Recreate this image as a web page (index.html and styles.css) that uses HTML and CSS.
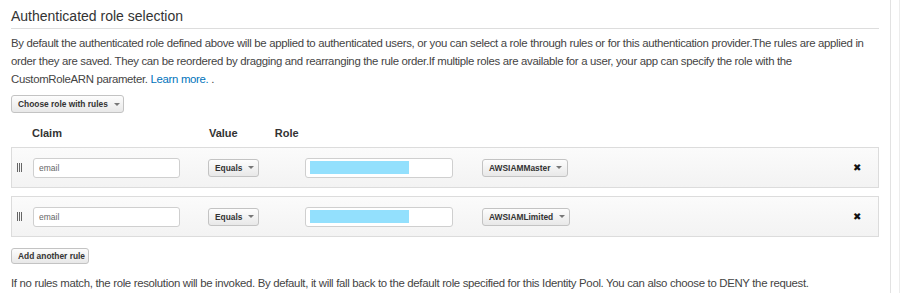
FILE: index.html
```html
<!DOCTYPE html>
<html lang="en">
<head>
  <meta charset="UTF-8">
  <meta name="viewport" content="width=device-width, initial-scale=1.0">
  <link rel="stylesheet" href="styles.css">
  <title>Authenticated role selection</title>
</head>
<body>
  <div id="console">
    <section class="roleSection">
      <h2>Authenticated role selection</h2>
      <p class="intro">By default the authenticated role defined above will be applied to authenticated users, or you can select a role through rules or for this authentication provider.The rules are applied in order they are saved. They can be reordered by dragging and rearranging the rule order.If multiple roles are available for a user, your app can specify the role with the<br>CustomRoleARN parameter. <a href="">Learn more.</a> .</p>

      <button class="btn chooseRole">Choose role with rules <span class="caret"></span></button>

      <div class="ruleHead">
        <span class="colClaim">Claim</span>
        <span class="colValue">Value</span>
        <span class="colRole">Role</span>
      </div>

      <div class="rule">
        <span class="handle"></span>
        <input class="field claim" type="text" placeholder="email">
        <button class="btn match">Equals <span class="caret"></span></button>
        <div class="field roleValue"><span class="masked"></span></div>
        <button class="btn roleBtn">AWSIAMMaster <span class="caret"></span></button>
        <span class="remove">&#10006;</span>
      </div>

      <div class="rule">
        <span class="handle"></span>
        <input class="field claim" type="text" placeholder="email">
        <button class="btn match">Equals <span class="caret"></span></button>
        <div class="field roleValue"><span class="masked"></span></div>
        <button class="btn roleBtn wide">AWSIAMLimited <span class="caret"></span></button>
        <span class="remove">&#10006;</span>
      </div>

      <button class="btn addRule">Add another rule</button>

      <p class="fallback">If no rules match, the role resolution will be invoked. By default, it will fall back to the default role specified for this Identity Pool. You can also choose to DENY the request.</p>
    </section>
    <div class="sideRail"></div>
  </div>
</body>
</html>
```

FILE: styles.css
```css
*{box-sizing: border-box;}
body
{
  margin: 0;
  background-color: #fff;
  font-family: "Liberation Sans", Arial, sans-serif;
  color: #444;
}
#console
{
  display: flex;
  height: 293px;
  overflow: hidden;
}
.roleSection
{
  width: 891px;
  padding: 0 11px;
  border-right: 1px solid #e2e2e2;
}
.sideRail
{
  width: 9px;
  border-right: 1px solid #ececec;
}
h2
{
  margin: 0;
  padding: 8px 0 4px;
  width: 868px;
  font-size: 14px;
  line-height: 16px;
  font-weight: normal;
  color: #333;
  border-bottom: 1px solid #ddd;
}
.intro,
.fallback
{
  font-size: 11.4px;
  letter-spacing: -0.32px;
  line-height: 18px;
}
.intro
{
  width: 868px;
  margin: 5px 0 0;
}
.intro a
{
  color: #0073bb;
  text-decoration: none;
}
.btn
{
  display: inline-flex;
  align-items: center;
  height: 18px;
  padding: 0 0 0 6px;
  font-family: inherit;
  font-size: 8.4px;
  font-weight: bold;
  color: #333;
  border: 1px solid #c3c3c3;
  border-radius: 3px;
  background: linear-gradient(#fdfdfd, #e8e8e8);
}
.caret
{
  display: inline-block;
  margin-left: 6px;
  border-left: 3px solid transparent;
  border-right: 3px solid transparent;
  border-top: 3px solid #777;
}
.chooseRole
{
  display: flex;
  margin-top: 7px;
  width: 113px;
}
.ruleHead
{
  display: flex;
  margin-top: 11px;
  height: 18px;
  line-height: 18px;
  font-size: 11px;
  font-weight: bold;
  color: #333;
}
.colClaim{margin-left: 21px;}
.colValue{margin-left: 147px;}
.colRole{margin-left: 37px;}
.rule
{
  display: flex;
  align-items: center;
  width: 868px;
  height: 41px;
  margin-top: 5px;
  border: 1px solid #dcdcdc;
  background: linear-gradient(#fbfbfb, #f3f3f3);
}
.rule + .rule{margin-top: 8px;}
/* poignee : 3 traits verticaux */
.handle
{
  width: 5px;
  height: 9px;
  margin: 0 11px 0 5px;
  border-left: 1px solid #666;
  border-right: 1px solid #666;
  background: linear-gradient(90deg, transparent 1px, #666 1px, #666 2px, transparent 2px);
}
.field
{
  height: 20px;
  border: 1px solid #cfcfcf;
  border-radius: 3px;
  background-color: #fff;
}
.claim
{
  width: 147px;
  padding: 0 5px;
  font-family: inherit;
  font-size: 8.5px;
  color: #666;
}
.claim::placeholder{color: #666;}
.match
{
  width: 51px;
  margin-left: 28px;
}
.roleValue
{
  width: 148px;
  margin-left: 46px;
  padding: 2px 4px;
}
.masked
{
  display: block;
  width: 99px;
  height: 13px;
  background-color: #93e0fd;
}
.roleBtn
{
  width: 86px;
  margin-left: 29px;
}
.roleBtn.wide{width: 88px;}
.remove
{
  margin-left: auto;
  margin-right: 17px;
  font-size: 10px;
  color: #111;
}
.addRule
{
  display: flex;
  margin-top: 11px;
  width: 78px;
  height: 16px;
}
.fallback
{
  margin: 10px 0 0;
}
```
